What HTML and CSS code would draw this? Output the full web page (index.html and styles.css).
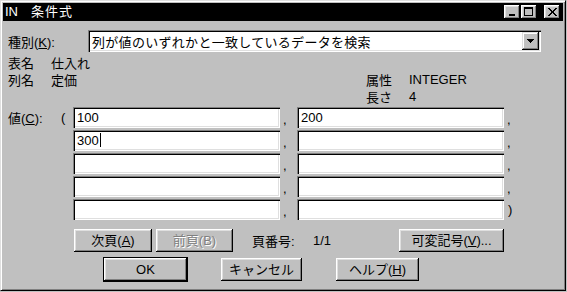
FILE: index.html
```html
<!DOCTYPE html>
<html lang="ja">
<head>
    <meta charset="UTF-8" />
    <title>IN 条件式</title>
    <link rel="stylesheet" href="styles.css">
</head>
<body>

<div class="window">
    <div class="titlebar">
        <span class="title-in">IN</span>
        <span class="title-text">条件式</span>
        <div class="caption-buttons">
            <div class="cap-btn">
                <svg width="8" height="8" viewBox="0 0 8 8"><rect x="1" y="6" width="6" height="2" fill="#000"/></svg>
            </div>
            <div class="cap-btn">
                <svg width="10" height="9" viewBox="0 0 10 9"><rect x="0.5" y="0.5" width="8" height="8" fill="none" stroke="#000"/><rect x="0" y="0" width="9" height="2" fill="#000"/></svg>
            </div>
            <div class="cap-btn close">
                <svg width="9" height="8" viewBox="0 0 9 8" shape-rendering="crispEdges"><path d="M0 0h2v1h-2zM1 1h2v1h-2zM2 2h2v1h-2zM3 3h3v2h-3zM2 5h2v1h-2zM1 6h2v1h-2zM0 7h2v1h-2zM7 0h2v1h-2zM6 1h2v1h-2zM5 2h2v1h-2zM5 5h2v1h-2zM6 6h2v1h-2zM7 7h2v1h-2z" fill="#000"/></svg>
            </div>
        </div>
    </div>

    <div class="content">
        <div class="kind-row">
            <span class="kind-label">種別(<u>K</u>):</span>
            <div class="combo">
                <span class="combo-text">列が値のいずれかと一致しているデータを検索</span>
                <div class="combo-arrow">
                    <svg width="7" height="4" viewBox="0 0 7 4" shape-rendering="crispEdges"><path d="M0 0h7v1h-7zM1 1h5v1h-5zM2 2h3v1h-3zM3 3h1v1h-1z" fill="#000"/></svg>
                </div>
            </div>
        </div>

        <div class="info">
            <span>表名</span><span>仕入れ</span><span></span><span></span>
            <span>列名</span><span>定価</span><span>属性</span><span>INTEGER</span>
            <span></span><span></span><span>長さ</span><span>4</span>
        </div>

        <div class="values">
            <span class="val-label">値(<u>C</u>):</span><span class="paren">(</span>
            <div class="field">100</div><span class="sep">,</span>
            <div class="field">200</div><span class="sep">,</span>

            <span></span><span></span>
            <div class="field">300<span class="caret"></span></div><span class="sep">,</span>
            <div class="field"></div><span class="sep">,</span>

            <span></span><span></span>
            <div class="field"></div><span class="sep">,</span>
            <div class="field"></div><span class="sep">,</span>

            <span></span><span></span>
            <div class="field"></div><span class="sep">,</span>
            <div class="field"></div><span class="sep">,</span>

            <span></span><span></span>
            <div class="field"></div><span class="sep">,</span>
            <div class="field"></div><span class="sep close-paren">)</span>
        </div>

        <div class="pager">
            <div class="btn btn-next">次頁(<u>A</u>)</div>
            <div class="btn btn-prev disabled">前頁(B)</div>
            <span class="page-label">頁番号:</span>
            <span class="page-num">1/1</span>
            <div class="btn btn-var">可変記号(<u>V</u>)...</div>
        </div>

        <div class="actions">
            <div class="btn btn-ok default">OK</div>
            <div class="btn btn-cancel">キャンセル</div>
            <div class="btn btn-help">ヘルプ(<u>H</u>)</div>
        </div>
    </div>
</div>

</body>
</html>
```

FILE: styles.css
```css
* {
    box-sizing: border-box;
}

html, body {
    margin: 0;
    padding: 0;
    background: #c0c0c0;
}

body {
    font-family: "Liberation Sans", "Noto Sans CJK JP", sans-serif;
    font-size: 13px;
    color: #000;
    width: 567px;
    height: 292px;
    overflow: hidden;
}

u {
    text-decoration: underline;
    text-underline-offset: 1px;
}

.window {
    width: 566px;
    height: 291px;
    border: 1px solid;
    border-color: #dfdfdf #000 #000 #dfdfdf;
    box-shadow: inset 1px 1px #fff, inset -1px -1px #808080;
    padding: 2px;
}

/* title bar */
.titlebar {
    height: 18px;
    background: #000;
    color: #fff;
    display: flex;
    align-items: center;
    padding: 0 3px 0 2px;
    line-height: 18px;
}

.title-text {
    margin-left: 13px;
    letter-spacing: 1px;
}

.caption-buttons {
    margin-left: auto;
    display: flex;
    gap: 1px;
}

.cap-btn {
    width: 16px;
    height: 14px;
    background: #c0c0c0;
    box-shadow: inset -1px -1px #000, inset 1px 1px #fff, inset -2px -2px #808080, inset 2px 2px #dfdfdf;
    display: flex;
    align-items: center;
    justify-content: center;
    padding-bottom: 1px;
}

.cap-btn.close {
    margin-left: 6px;
}

/* body */
.content {
    padding: 9px 0 0 5px;
}

.kind-row {
    display: flex;
    align-items: center;
    height: 22px;
}

.kind-label {
    width: 80px;
}

.combo, .field {
    background: #fff;
    box-shadow: inset 1px 1px #808080, inset 2px 2px #000, inset -1px -1px #fff, inset -2px -2px #dfdfdf;
}

.combo {
    width: 453px;
    height: 22px;
    display: flex;
    align-items: center;
    padding: 2px;
}

.combo-text {
    flex: 1;
    padding-left: 2px;
    letter-spacing: 0.3px;
}

.combo-arrow {
    width: 17px;
    height: 18px;
    background: #c0c0c0;
    box-shadow: inset -1px -1px #000, inset 1px 1px #dfdfdf, inset -2px -2px #808080, inset 2px 2px #fff;
    display: flex;
    align-items: center;
    justify-content: center;
}

.info {
    display: grid;
    grid-template-columns: 43px 315px 43px auto;
    grid-auto-rows: 17px;
    align-items: center;
    margin-top: 2px;
}

.values {
    display: grid;
    grid-template-columns: 52px 13px 207px 17px 207px auto;
    grid-auto-rows: 21px;
    row-gap: 2px;
    margin-top: 2px;
}

.val-label, .paren {
    align-self: center;
}

.paren {
    padding-left: 1px;
}

.field {
    height: 21px;
    padding: 3px 0 0 4px;
    line-height: 16px;
}

.caret {
    display: inline-block;
    width: 1px;
    height: 14px;
    background: #000;
    vertical-align: -2px;
    margin-left: 1px;
}

.sep {
    align-self: end;
    padding-left: 3px;
    line-height: 16px;
}

.sep.close-paren {
    align-self: center;
    padding-left: 4px;
}

/* buttons */
.btn {
    height: 23px;
    background: #c0c0c0;
    box-shadow: inset -1px -1px #000, inset 1px 1px #fff, inset -2px -2px #808080, inset 2px 2px #dfdfdf;
    display: flex;
    align-items: center;
    justify-content: center;
    line-height: 1;
}

.btn.disabled {
    color: #808080;
    text-shadow: 1px 1px #fff;
}

.btn.default {
    outline: 1px solid #000;
}

.pager {
    display: flex;
    align-items: center;
    margin-top: 9px;
    padding-left: 66px;
}

.btn-next {
    width: 78px;
    margin-right: 4px;
}

.btn-prev {
    width: 77px;
}

.page-label {
    margin-left: 19px;
    width: 61px;
}

.page-num {
    width: 86px;
}

.btn-var {
    width: 105px;
}

.actions {
    display: flex;
    margin-top: 6px;
    padding-left: 96px;
}

.btn-ok {
    width: 83px;
}

.btn-cancel {
    width: 81px;
    margin-left: 34px;
}

.btn-help {
    width: 83px;
    margin-left: 34px;
}
```
